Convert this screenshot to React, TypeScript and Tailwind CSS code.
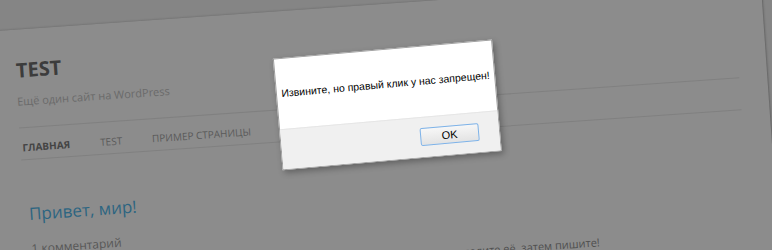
export default function App() {
  const font = { fontFamily: '"Open Sans", "Liberation Sans", sans-serif' }

  return (
    <div className="relative w-[772px] h-[250px] overflow-hidden bg-[#858585]">
      <div className="relative w-[772px] h-[250px] -rotate-4">
        {/* page card behind the overlay */}
        <div
          className="mt-[4px] ml-[-40px] w-[810px] h-[330px] bg-[#8c8c8c] pl-[60px] pr-[28px] pt-[31px] shadow-[1px_0_2px_rgba(0,0,0,0.25)]"
          style={font}
        >
          <div className="pb-[21px] border-b border-[#808080]">
            <div className="text-[20px] leading-none font-bold text-[#3c3c3c] pl-[1px]">TEST</div>
            <div className="mt-[15px] text-[11px] leading-none text-[#6a6a6a]">Ещё один сайт на WordPress</div>
          </div>
          <div className="flex gap-[30px] pl-[2px] pt-[14px] pb-[7px] border-b border-[#808080] text-[10px] leading-none uppercase">
            <span className="font-bold text-[#444444]">Главная</span>
            <span className="text-[#5a5a5a]">Test</span>
            <span className="text-[#5a5a5a]">Пример страницы</span>
          </div>
          <div className="pl-[4px]">
            <div className="mt-[45px] text-[17px] leading-none text-[#2c6581]">Привет, мир!</div>
            <div className="mt-[21px] text-[12px] leading-none text-[#575757]">1 комментарий</div>
            <p className="mt-[21px] text-[11px] leading-none text-[#4f4f4f]">
              Добро пожаловать в WordPress. Это ваша первая запись. Отредактируйте или удалите её, затем пишите!
            </p>
          </div>
        </div>

        {/* alert dialog */}
        <div
          className="absolute left-[279px] top-[45px] w-[220px] h-[112px] -rotate-1 flex flex-col border border-[#9c9c9c] bg-white shadow-[2px_3px_6px_rgba(0,0,0,0.3)]"
          style={{ fontFamily: '"Liberation Sans", Arial, sans-serif' }}
        >
          <div className="h-[70px] flex items-center justify-center whitespace-nowrap text-[10.5px] text-black">
            Извините, но правый клик у нас запрещен!
          </div>
          <div className="flex-1 bg-[#f0f0f0] border-t border-[#e6e6e6] flex justify-end items-start pt-[10px] pr-[20px]">
            <button className="w-[59px] h-[18px] rounded-[2px] border border-[#7db2e8] bg-gradient-to-b from-[#f7f7f7] to-[#e3e3e3] text-[11px] leading-none text-black">
              OK
            </button>
          </div>
        </div>
      </div>
    </div>
  )
}
